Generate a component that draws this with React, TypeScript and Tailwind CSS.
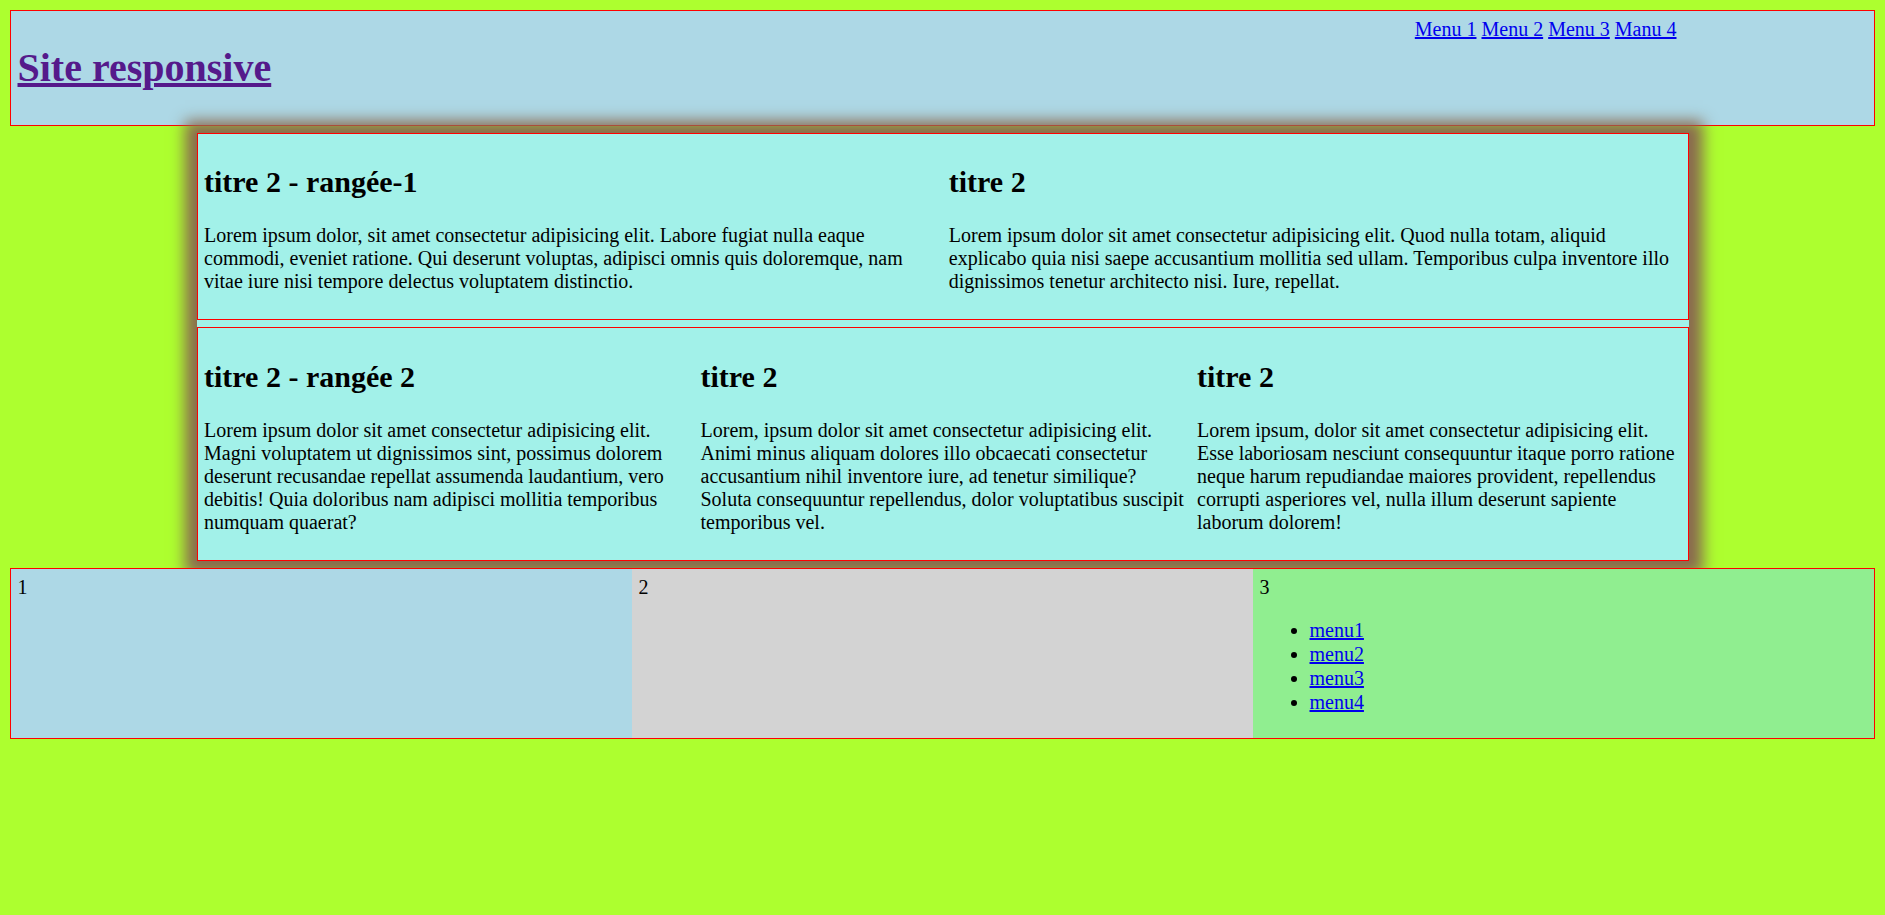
import React from 'react';

const rowOne = [
  {
    title: 'titre 2 - rangée-1',
    text: 'Lorem ipsum dolor, sit amet consectetur adipisicing elit. Labore fugiat nulla eaque commodi, eveniet ratione. Qui deserunt voluptas, adipisci omnis quis doloremque, nam vitae iure nisi tempore delectus voluptatem distinctio.',
  },
  {
    title: 'titre 2',
    text: 'Lorem ipsum dolor sit amet consectetur adipisicing elit. Quod nulla totam, aliquid explicabo quia nisi saepe accusantium mollitia sed ullam. Temporibus culpa inventore illo dignissimos tenetur architecto nisi. Iure, repellat.',
  },
];

const rowTwo = [
  {
    title: 'titre 2 - rangée 2',
    text: 'Lorem ipsum dolor sit amet consectetur adipisicing elit. Magni voluptatem ut dignissimos sint, possimus dolorem deserunt recusandae repellat assumenda laudantium, vero debitis! Quia doloribus nam adipisci mollitia temporibus numquam quaerat?',
  },
  {
    title: 'titre 2',
    text: 'Lorem, ipsum dolor sit amet consectetur adipisicing elit. Animi minus aliquam dolores illo obcaecati consectetur accusantium nihil inventore iure, ad tenetur similique? Soluta consequuntur repellendus, dolor voluptatibus suscipit temporibus vel.',
  },
  {
    title: 'titre 2',
    text: 'Lorem ipsum, dolor sit amet consectetur adipisicing elit. Esse laboriosam nesciunt consequuntur itaque porro ratione neque harum repudiandae maiores provident, repellendus corrupti asperiores vel, nulla illum deserunt sapiente laborum dolorem!',
  },
];

const Row = ({ cols }: { cols: { title: string; text: string }[] }) => (
  <section className="flex gap-[12.5px] border border-[#ff0000] p-[6.5px]">
    {cols.map((col, i) => (
      <div key={i} className="flex-1 min-w-0">
        <h2 className="my-[24.9px] text-[30px] font-bold">{col.title}</h2>
        <p className="my-[20px]">{col.text}</p>
      </div>
    ))}
  </section>
);

export default function App() {
  return (
    <div className="min-h-screen bg-[#adff2f] p-[10px] font-['Liberation_Serif',serif] text-[20px] leading-[normal] text-black">
      {/* Header */}
      <header className="flex items-start justify-between border border-[#ff0000] bg-[#add8e6] p-[6.5px]">
        <h1 className="my-[26.8px] text-[40px] font-bold">
          <a href="#" className="text-[#551a8b] underline">Site responsive</a>
        </h1>
        <nav className="mr-[191px]">
          <a href="#" className="text-[#0000ee] underline">Menu 1</a>{' '}
          <a href="#" className="text-[#0000ee] underline">Menu 2</a>{' '}
          <a href="#" className="text-[#0000ee] underline">Menu 3</a>{' '}
          <a href="#" className="text-[#0000ee] underline">Manu 4</a>
        </nav>
      </header>

      {/* Main */}
      <main className="mx-auto my-[7px] flex w-[80%] flex-col gap-[7px] bg-[#a2f1e9] shadow-[1px_1px_14px_13px_#8a6a4f]">
        <Row cols={rowOne} />
        <Row cols={rowTwo} />
      </main>

      {/* Footer */}
      <footer className="relative grid grid-cols-3 border border-[#ff0000]">
        <div className="bg-[#add8e6] p-[6.5px]">1</div>
        <div className="bg-[#d3d3d3] p-[6.5px]">2</div>
        <div className="bg-[#90ee90] p-[6.5px]">
          3
          <ul className="mt-[19px] mb-[18px] list-disc pl-[50px]">
            {['menu1', 'menu2', 'menu3', 'menu4'].map(m => (
              <li key={m} className="leading-[24px]">
                <a href="#" className="text-[#0000ee] underline">{m}</a>
              </li>
            ))}
          </ul>
        </div>
      </footer>
    </div>
  );
}
